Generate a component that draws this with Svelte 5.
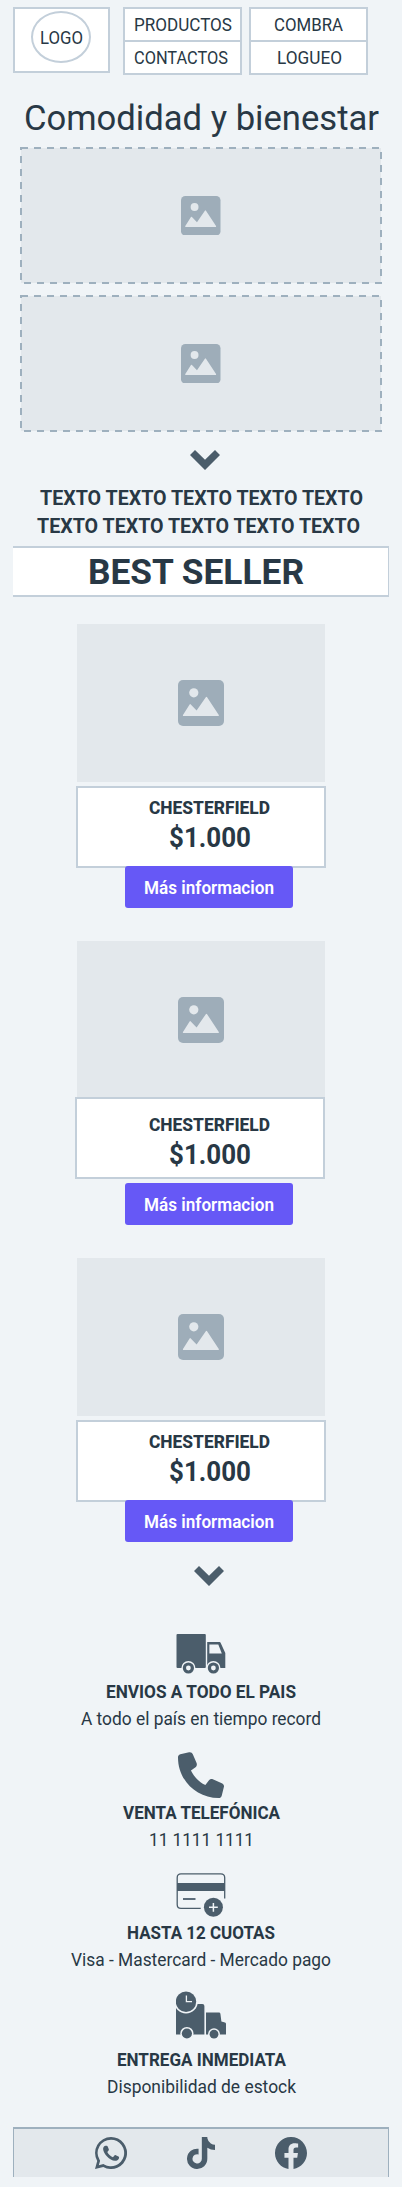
<script>
  const CAP = 0.711;

  const menus = [
    [
      { text: 'PRODUCTOS', width: 98, indent: 9 },
      { text: 'CONTACTOS', width: 94, indent: 9 }
    ],
    [
      { text: 'COMBRA', width: 69, indent: 23 },
      { text: 'LOGUEO', width: 65, indent: 26 }
    ]
  ];

  const products = [
    { name: 'CHESTERFIELD', price: '$1.000', raised: false },
    { name: 'CHESTERFIELD', price: '$1.000', raised: true },
    { name: 'CHESTERFIELD', price: '$1.000', raised: false }
  ];

  const services = [
    { icon: 'truck', iconHeight: 40, title: 'ENVIOS A TODO EL PAIS', titleWidth: 190, note: 'A todo el país en tiempo record', noteWidth: 240, gap: 11, noteGap: 14 },
    { icon: 'phone', iconHeight: 46, title: 'VENTA TELEFÓNICA', titleWidth: 157, note: '11 1111 1111', noteWidth: 105, gap: 8, noteGap: 14 },
    { icon: 'card', iconHeight: 44, title: 'HASTA 12 CUOTAS', titleWidth: 148, note: 'Visa - Mastercard - Mercado pago', noteWidth: 260, gap: 9, noteGap: 14 },
    { icon: 'express', iconHeight: 49, title: 'ENTREGA INMEDIATA', titleWidth: 169, note: 'Disponibilidad de estock', noteWidth: 189, gap: 13, noteGap: 14 }
  ];
</script>

{#snippet label(text, width, size, weight)}
  <svg class="label" {width} height={Math.round(size * CAP)}>
    <text x="0" y={Math.round(size * CAP)} font-size={size} font-weight={weight} textLength={width} lengthAdjust="spacingAndGlyphs">{text}</text>
  </svg>
{/snippet}

{#snippet picture(size)}
  <svg class="picture" width={size} height={size} viewBox="0 0 46 46">
    <rect width="46" height="46" rx="5" fill="#9eadb9" />
    <circle cx="15.8" cy="12.8" r="4.6" fill="#e3e8ec" />
    <path d="M5.4 36Q4.5 36 5 35L11.6 24.5Q12.2 23.6 12.8 24.5L18.6 30.6L27.8 17.2Q28.4 16.2 29.1 17.2L40.8 35Q41.2 36 40.4 36Z" fill="#e3e8ec" />
  </svg>
{/snippet}

{#snippet chevron()}
  <svg width="30" height="20" viewBox="0 0 30 20" fill="#4b5d6b">
    <path d="M0 5L5 0L15 9.8L25 0L30 5L15 20Z" />
  </svg>
{/snippet}

{#snippet serviceIcon(name)}
  {#if name === 'truck'}
    <svg width="50" height="40" viewBox="0 0 50 40" fill="#4b5d6b">
      <rect x="0.5" y="0" width="29.3" height="34" rx="1" />
      <path d="M31.2 8H43.6Q44.3 8 44.6 8.7L49.3 19V34H31.2Z" />
      <path d="M33.4 10.5H42.3L45.8 19.4H33.4Z" fill="#f0f4f7" />
      <circle cx="12.4" cy="34" r="7" fill="#f0f4f7" />
      <circle cx="37.4" cy="34" r="7" fill="#f0f4f7" />
      <circle cx="12.4" cy="34" r="4" fill="none" stroke="#4b5d6b" stroke-width="3.2" />
      <circle cx="37.4" cy="34" r="4" fill="none" stroke="#4b5d6b" stroke-width="3.2" />
    </svg>
  {:else if name === 'phone'}
    <svg width="46" height="46" viewBox="0 0 512 512" fill="#4b5d6b">
      <path d="M164.9 24.6c-7.7-18.6-22-25.5-41.4-22.2l-98 22C8.1 29.2 0 42 0 60C0 311.4 200.6 512 452 512c18 0 29.8-8.1 34.6-25.5l24-97c5.3-19.4-4.6-34.7-23.2-42.4l-100-43c-16.3-6.8-31.2-2.1-42.3 11.6L304.7 368C234.3 334.7 177.3 277.7 144 207.3L195.3 169c13.7-11.2 18.4-30 11.6-46.3l-42-98z" />
    </svg>
  {:else if name === 'card'}
    <svg width="50" height="44" viewBox="0 0 50 44" fill="none" stroke="#4b5d6b">
      <path d="M24.7 35.4H5Q1.2 35.4 1.2 31.5V4.7Q1.2 .8 5 .8H44.8Q48.7 .8 48.7 4.7V25.5" stroke-width="1.3" />
      <path d="M1 14H49" stroke-width="8" />
      <path d="M7 26H19.5" stroke-width="1.8" />
      <circle cx="37.4" cy="34.3" r="9.5" fill="#4b5d6b" stroke="none" />
      <path d="M33 34.3H41.8M37.4 29.9V38.7" stroke="#f0f4f7" stroke-width="1.5" />
    </svg>
  {:else}
    <svg width="50" height="49" viewBox="0 0 50 49" fill="#4b5d6b">
      <path d="M0 13H26.3Q28.4 13 28.4 15V43.5H0Z" />
      <path d="M30 21.5H43Q44.2 21.5 44.4 22.8L45.4 30.5L49 31.5Q50 31.9 50 33V43.5H30Z" />
      <circle cx="10" cy="10.7" r="11.8" fill="#f0f4f7" />
      <circle cx="10" cy="10.7" r="10.2" />
      <path d="M10.4 4.5V10.7H16" fill="none" stroke="#f0f4f7" stroke-width="1.3" />
      <circle cx="10.9" cy="42.5" r="6.6" fill="#f0f4f7" />
      <circle cx="10.9" cy="42.5" r="5.1" />
      <circle cx="38" cy="43.2" r="5.9" fill="#f0f4f7" />
      <circle cx="38" cy="43.2" r="4.4" />
    </svg>
  {/if}
{/snippet}

<div class="page">
  <header>
    <div class="logo">
      <div class="oval">{@render label('LOGO', 43, 18, 400)}</div>
    </div>
    <nav>
      {#each menus as menu}
        <div class="menu">
          {#each menu as item}
            <div class="entry" style="padding-left: {item.indent}px">{@render label(item.text, item.width, 18, 400)}</div>
          {/each}
        </div>
      {/each}
    </nav>
  </header>

  <h1>{@render label('Comodidad y bienestar', 355, 34.5, 400)}</h1>

  <section class="banners">
    {#each [0, 1] as banner (banner)}
      <div class="banner">
        <svg class="dashes" width="362" height="137">
          <rect x="1" y="1" width="360" height="135" fill="#e3e8ec" stroke="#9eb0be" stroke-width="2" stroke-dasharray="7 6" />
        </svg>
        {@render picture(39.5)}
      </div>
    {/each}
  </section>

  <div class="arrow first">{@render chevron()}</div>

  <div class="intro">
    {@render label('TEXTO TEXTO TEXTO TEXTO TEXTO', 323, 21, 700)}
    {@render label('TEXTO TEXTO TEXTO TEXTO TEXTO', 323, 21, 700)}
  </div>

  <h2>{@render label('BEST SELLER', 216, 35.5, 700)}</h2>

  <section class="products">
    {#each products as product}
      <article class:raised={product.raised}>
        <div class="photo">{@render picture(46)}</div>
        <div class="details">
          {@render label(product.name, 121, 18, 800)}
          {@render label(product.price, 82, 27, 700)}
        </div>
        <button>{@render label('Más informacion', 130, 18, 600)}</button>
      </article>
    {/each}
  </section>

  <div class="arrow second">{@render chevron()}</div>

  <section class="services">
    {#each services as service}
      <div class="service {service.icon}">
        <div class="icon" style="height: {service.iconHeight}px">{@render serviceIcon(service.icon)}</div>
        <div style="margin-top: {service.gap}px">{@render label(service.title, service.titleWidth, 18, 700)}</div>
        <div style="margin-top: {service.noteGap}px">{@render label(service.note, service.noteWidth, 18, 400)}</div>
      </div>
    {/each}
  </section>

  <footer>
    <svg width="32" height="32" viewBox="0 0 32 32" fill="#4b5d6b">
      <path fill-rule="evenodd" d="M16 0A16 16 0 1 1 8.3 30L0 32L2.2 24A16 16 0 0 1 16 0ZM16 2.7A13.3 13.3 0 0 0 4.7 23L5.1 23.7L3.8 28.3L8.5 27L9.2 27.5A13.3 13.3 0 1 0 16 2.7Z" />
      <path d="M8.1 12C8.1 10.3 9.2 8.7 10.6 8.7H11.6C12.2 8.7 12.5 9.1 12.8 9.8L13.8 12.3C14 12.9 13.9 13.3 12.3 15.1C13.6 17.5 15.2 19.1 17.9 20.2L19.5 18.4C19.9 17.9 20.3 18 20.8 18.2L23.4 19.5C24.2 19.9 24.2 20.4 23.9 21.4C23.3 23.2 21.5 23.9 20 23.8C14.6 23.5 8.3 16.8 8.1 12Z" />
    </svg>
    <svg width="28" height="32" viewBox="0 0 448 512" fill="#4b5d6b">
      <path d="M448 209.9a210.1 210.1 0 0 1-122.8-39.3V349.4A162.6 162.6 0 1 1 185 188.3V278.2a74.6 74.6 0 1 0 52.2 71.2V0l88 0a121.2 121.2 0 0 0 1.9 22.2h0A122.2 122.2 0 0 0 381 102.4a121.4 121.4 0 0 0 67 20.1z" />
    </svg>
    <svg width="32" height="32" viewBox="0 0 16 16" fill="#4b5d6b">
      <path d="M16 8.049c0-4.446-3.582-8.05-8-8.05C3.58 0-.002 3.603-.002 8.05c0 4.017 2.926 7.347 6.75 7.951v-5.625h-2.03V8.05H6.75V6.275c0-2.017 1.195-3.131 3.022-3.131.876 0 1.791.157 1.791.157v1.98h-1.009c-.993 0-1.303.621-1.303 1.258v1.51h2.218l-.354 2.326H9.25V16c3.824-.604 6.75-3.934 6.75-7.951" />
    </svg>
  </footer>
</div>

<style>
  :global(body) {
    background: #f0f4f7;
  }

  .page {
    box-sizing: border-box;
    width: 402px;
    height: 2187px;
    padding-top: 7px;
    overflow: hidden;
    background: #f0f4f7;
    color: #283845;
    font-family: Roboto, "Liberation Sans", sans-serif;
  }

  .page * {
    box-sizing: border-box;
  }

  svg {
    display: block;
    flex: none;
  }

  .label {
    overflow: visible;
    fill: currentColor;
  }

  header {
    display: flex;
    align-items: flex-start;
    gap: 13px;
    height: 68px;
    padding-left: 13px;
  }

  .logo {
    width: 97px;
    height: 66px;
    padding: 2px 0 0 16px;
    border: 2px solid #c3cfda;
    background: #fff;
  }

  .oval {
    display: flex;
    align-items: center;
    justify-content: center;
    width: 60px;
    height: 52px;
    border: 2px solid #c3cfda;
    border-radius: 50%;
  }

  nav {
    display: flex;
    gap: 7px;
  }

  .menu {
    width: 119px;
    border: 2px solid #c3cfda;
    background: #fff;
  }

  .entry {
    height: 31px;
    padding-top: 9px;
  }

  .entry + .entry {
    height: 33px;
    border-top: 2px solid #c3cfda;
  }

  h1 {
    height: 42px;
    margin: 30px 0 0 23.5px;
  }

  .banners {
    display: flex;
    flex-direction: column;
    align-items: center;
    gap: 11px;
  }

  .banner {
    display: grid;
    place-items: center;
    width: 362px;
    height: 137px;
  }

  .banner > :global(*) {
    grid-area: 1 / 1;
  }

  .arrow {
    display: flex;
    justify-content: center;
  }

  .first {
    margin-top: 18px;
    padding-left: 8px;
  }

  .second {
    margin-top: 24px;
    padding-left: 16px;
  }

  .intro {
    display: grid;
    gap: 13px;
    width: 325.5px;
    margin: 20px 0 0 37px;
  }

  .intro > :global(:first-child) {
    justify-self: end;
  }

  h2 {
    display: flex;
    justify-content: center;
    width: 376px;
    height: 51px;
    margin: 13px 0 0 13px;
    padding: 11px 9px 0 0;
    border: solid #c3cfda;
    border-width: 2px 1px 2px 0;
    background: #fff;
  }

  .products {
    display: flex;
    flex-direction: column;
    gap: 33px;
    margin: 27px 0 0 76px;
  }

  article {
    display: flex;
    flex-direction: column;
    width: 250px;
  }

  .photo {
    display: grid;
    place-items: center;
    width: 248px;
    height: 158px;
    margin-left: 1px;
    background: #e3e8ec;
  }

  .details {
    display: flex;
    flex-direction: column;
    align-items: center;
    gap: 14px;
    height: 82px;
    margin-top: 4px;
    padding: 13px 0 0 17px;
    border: 2px solid #c3cfda;
    background: #fff;
  }

  .raised .details {
    margin: -2px 1px 0 -1px;
    padding: 19px 0 0 19px;
    z-index: 1;
  }

  button {
    display: flex;
    justify-content: center;
    width: 168px;
    height: 42px;
    margin: -2px 0 0 49px;
    padding: 15px 0 0;
    border: 0;
    border-radius: 3px;
    background: #6658f6;
    color: #fff;
    font: inherit;
  }

  .raised button {
    margin-top: 4px;
  }

  .services {
    display: flex;
    flex-direction: column;
    margin-top: 48px;
  }

  .service {
    display: flex;
    flex-direction: column;
    align-items: center;
  }

  .phone {
    margin-top: 27px;
  }

  .card {
    margin-top: 27px;
  }

  .express {
    margin-top: 25px;
  }

  footer {
    display: flex;
    align-items: flex-start;
    width: 376px;
    height: 50px;
    margin: 34px 0 0 13px;
    padding: 8px 0 0 81px;
    gap: 60px;
    border: 1px solid #9eb0be;
    border-width: 2px 1px 0;
    background: #e3e8ec;
  }
</style>
